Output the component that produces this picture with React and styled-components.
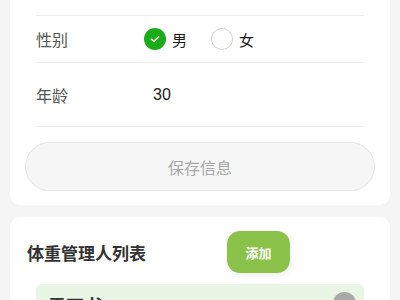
import React from 'react'
import styled, { createGlobalStyle } from 'styled-components'

const GlobalStyle = createGlobalStyle`
  html, body {
    margin: 0;
    padding: 0;
    background: #f5f5f5;
    font-family: "Noto Sans CJK SC", "Noto Sans", sans-serif;
    overflow: hidden;
  }
`

const Page = styled.div`
  width: 400px;
  padding: 0 10px;
  box-sizing: border-box;
  margin-top: -20px;
  display: flex;
  flex-direction: column;
  gap: 12px;
`

const Card = styled.div`
  background: #fff;
  border-radius: 10px;
  padding: ${(p) => p.$pad || '0'};
`

const Rows = styled.div`
  margin: 0 26px;
  border-top: 1px solid #eeeeee;
`

const Row = styled.div`
  display: flex;
  align-items: center;
  box-sizing: border-box;
  height: ${(p) => p.$h}px;
  border-bottom: 1px solid #eeeeee;
`

const Label = styled.div`
  width: 108px;
  font-size: 16px;
  color: #555;
`

const Value = styled.div`
  margin-left: ${(p) => p.$indent || 0}px;
  font-size: 16px;
  color: #1a1a1a;
  font-family: "Liberation Sans", "Noto Sans CJK SC", sans-serif;
`

const RadioGroup = styled.div`
  display: flex;
  align-items: center;
  gap: 24px;
`

const RadioItem = styled.label`
  display: flex;
  align-items: center;
  gap: 6px;
  font-size: 15px;
  color: #1a1a1a;
`

const RadioDot = styled.span`
  width: 22px;
  height: 22px;
  border-radius: 50%;
  box-sizing: border-box;
  display: flex;
  align-items: center;
  justify-content: center;
  background: ${(p) => (p.$on ? '#1aad19' : '#fff')};
  border: ${(p) => (p.$on ? 'none' : '1px solid #d1d1d1')};
`

const SaveButton = styled.button`
  display: block;
  width: calc(100% - 32px);
  margin: 16px 16px 0;
  height: 47px;
  border-radius: 24px;
  border: none;
  background: #f6f6f6;
  box-shadow: 0 0 0 1px #e6e6e6;
  color: #a8a8a8;
  font-size: 16px;
  font-family: "Noto Sans CJK SC", sans-serif;
`

const ListHeader = styled.div`
  display: grid;
  grid-template-columns: 200px auto;
  align-items: center;
  padding: 14px 17px 0;
`

const ListTitle = styled.div`
  font-size: 17px;
  font-weight: 700;
  color: #333;
`

const AddButton = styled.button`
  width: 63px;
  height: 42px;
  border-radius: 13px;
  border: none;
  background: #8bc34a;
  color: #fff;
  font-size: 13px;
  font-weight: 700;
  font-family: "Noto Sans CJK SC", sans-serif;
  box-shadow: 2px 3px 6px rgba(0, 0, 0, 0.06);
`

const ListItem = styled.div`
  margin: 11px 26px 0;
  background: #e9f6e5;
  border-radius: 6px;
  height: 60px;
  padding: 8px 8px 0 12px;
  display: flex;
  align-items: flex-start;
  gap: 8px;
`

const ItemName = styled.div`
  font-size: 18px;
  font-weight: 700;
  color: #333;
`

const ItemSub = styled.div`
  font-size: 13px;
  color: #999;
  margin-top: 5px;
  flex: 1;
`

const Avatar = styled.div`
  width: 23px;
  height: 23px;
  border-radius: 50%;
  background: #a9a9a9;
  margin-top: 0;
`

const Check = () => (
  <svg width="12" height="12" viewBox="0 0 12 12" fill="none">
    <path d="M2.5 6.2 L5 8.5 L9.6 3.8" stroke="#fff" strokeWidth="1.5" strokeLinecap="round" strokeLinejoin="round" />
  </svg>
)

export default function App() {
  return (
    <>
      <GlobalStyle />
      <Page>
        <Card $pad="35px 0 15px">
          <Rows>
            <Row $h={47}>
              <Label>性别</Label>
              <RadioGroup>
                <RadioItem>
                  <RadioDot $on><Check /></RadioDot>男
                </RadioItem>
                <RadioItem>
                  <RadioDot />女
                </RadioItem>
              </RadioGroup>
            </Row>
            <Row $h={64}>
              <Label>年龄</Label>
              <Value $indent={9}>30</Value>
            </Row>
          </Rows>
          <SaveButton>保存信息</SaveButton>
        </Card>
        <Card $pad="0 0 12px">
          <ListHeader>
            <ListTitle>体重管理人列表</ListTitle>
            <AddButton>添加</AddButton>
          </ListHeader>
          <ListItem>
            <ItemName>雷不书</ItemName>
            <ItemSub>男 30岁 172cm</ItemSub>
            <Avatar />
          </ListItem>
        </Card>
      </Page>
    </>
  )
}
